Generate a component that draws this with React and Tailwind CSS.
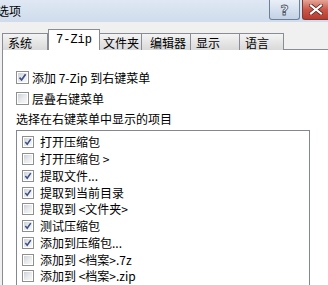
import React from "react";

const FONT = { fontFamily: '"Noto Sans CJK SC", "Noto Sans", sans-serif' };

function Check({ checked, size = 13 }) {
  return (
    <div
      className="shrink-0 border border-[#8e8f8f] bg-white p-px"
      style={{ width: size, height: size }}
    >
      <div className="relative h-full w-full bg-gradient-to-br from-[#cdd1d8] via-[#e8eaec] to-[#f8f8f8]">
        {checked && (
          <svg viewBox="0 0 9 9" className="absolute inset-0 h-full w-full">
            <path d="M1.5 4.6 L3.6 7 L7.6 1.3" fill="none" stroke="#3b4f86" strokeWidth="1.7" />
          </svg>
        )}
      </div>
    </div>
  );
}

const tabs = [
  { label: "系统", w: "w-[46px]", pl: "pl-[5px]" },
  { label: "7-Zip", w: "w-[52px]", pl: "pl-[7px]", active: true },
  { label: "文件夹", w: "w-[43px]", pl: "pl-[3px]" },
  { label: "编辑器", w: "w-[50px]", pl: "pl-[8px]" },
  { label: "显示", w: "w-[50px]", pl: "pl-[5px]" },
  { label: "语言", w: "w-[45px]", pl: "pl-[5px]" },
];

const items = [
  ["打开压缩包", true],
  ["打开压缩包 >", false],
  ["提取文件...", true],
  ["提取到当前目录", true],
  ["提取到 <文件夹>", false],
  ["测试压缩包", true],
  ["添加到压缩包...", true],
  ["添加到 <档案>.7z", false],
  ["添加到 <档案>.zip", false],
];

export default function App() {
  return (
    <div
      className="relative h-[285px] w-[328px] overflow-hidden bg-[#f0f0f0] text-[12px] text-black"
      style={FONT}
    >
      {/* Title bar */}
      <div className="flex h-[22px] items-start justify-between bg-gradient-to-b from-[#dfe8f3] to-[#cfdcec]">
        <div className="ml-[-3px] mt-[4px] leading-[14px] text-[12px]">选项</div>
        <div className="flex items-start">
          <div className="flex h-[20px] w-[31px] items-center justify-center rounded-b-[3px] border border-t-0 border-[#6f7f96] bg-gradient-to-b from-[#e9eff7] to-[#c3d2e6]">
            <span
              className="text-[14px] font-bold leading-none text-[#f4f6f9]"
              style={{ fontFamily: '"DejaVu Sans", sans-serif', WebkitTextStroke: "0.8px #4a5566" }}
            >
              ?
            </span>
          </div>
          <div className="ml-[2px] flex h-[20px] w-[26px] items-center justify-start rounded-bl-[3px] border border-t-0 border-r-0 border-[#7a3a35] bg-gradient-to-b from-[#e4a597] via-[#c9584a] to-[#b93a2d] pl-[6px]">
            <svg width="14" height="11" viewBox="0 0 14 11">
              <path d="M2 1.5 L12 9.5 M12 1.5 L2 9.5" stroke="#5a2420" strokeWidth="3.6" strokeLinecap="square" />
              <path d="M2 1.5 L12 9.5 M12 1.5 L2 9.5" stroke="#ffffff" strokeWidth="2.2" strokeLinecap="square" />
            </svg>
          </div>
        </div>
      </div>

      {/* Tab strip */}
      <div className="mt-[7px] flex items-end pl-[2px] relative z-10 -mb-px">
        {tabs.map((t) =>
          t.active ? (
            <div
              key={t.label}
              className={`${t.w} ${t.pl} h-[21px] border border-b-0 border-[#898c95] bg-white pt-[4px] leading-[13px]`}
              style={{ fontFamily: '"Liberation Mono", monospace', fontSize: "12px" }}
            >
              {t.label}
            </div>
          ) : (
            <div
              key={t.label}
              className={`${t.w} ${t.pl} -ml-px first:ml-0 h-[17px] border border-b-0 border-[#898c95] bg-gradient-to-b from-[#f4f4f4] to-[#d9d9d9] pt-px leading-[15px]`}
            >
              {t.label}
            </div>
          )
        )}
      </div>

      {/* Panel */}
      <div className="ml-[2px] h-[260px] w-[340px] border-l border-t border-[#898c95] bg-white pl-[13px] pt-[21px]">
        <div className="flex h-[13px] items-center gap-[3px]">
          <Check checked />
          <span className="leading-[13px]">添加 7-Zip 到右键菜单</span>
        </div>
        <div className="mt-[8px] flex h-[13px] items-center gap-[3px]">
          <Check checked={false} />
          <span className="leading-[13px]">层叠右键菜单</span>
        </div>
        <div className="mt-[7px] leading-[14px]">选择在右键菜单中显示的项目</div>

        <div className="mt-[4px] h-[200px] w-[294px] border border-[#828790] bg-white pt-[3px] pl-[5px]">
          {items.map(([label, checked]) => (
            <div key={label} className="flex h-[16.75px] items-center gap-[6px]">
              <Check checked={checked} size={12} />
              <span className="leading-[14px]">{label}</span>
            </div>
          ))}
        </div>
      </div>
    </div>
  );
}
